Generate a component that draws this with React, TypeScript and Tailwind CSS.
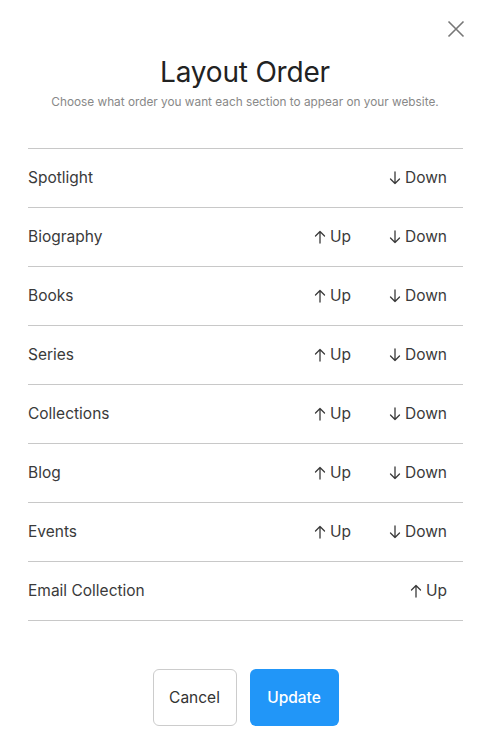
const sections = [
  "Spotlight",
  "Biography",
  "Books",
  "Series",
  "Collections",
  "Blog",
  "Events",
  "Email Collection",
];

const Arrow = ({ down }: { down?: boolean }) => (
  <svg
    width="12"
    height="14"
    viewBox="0 0 12 14"
    fill="none"
    stroke="currentColor"
    strokeWidth="1.3"
    strokeLinecap="round"
    strokeLinejoin="round"
    className={down ? "rotate-180" : ""}
  >
    <path d="M6 1.5v11.5M1.5 6 6 1.5 10.5 6" />
  </svg>
);

export default function App() {
  return (
    <div
      className="w-[490px] h-[753px] bg-white text-[#3a3a3a] relative"
      style={{ fontFamily: "Inter, 'Noto Sans', sans-serif" }}
    >
      {/* Close */}
      <button className="absolute left-[447px] top-[20px] text-[#777]">
        <svg width="18" height="18" viewBox="0 0 18 18" fill="none" stroke="currentColor" strokeWidth="1.6">
          <path d="M1.5 1.5l15 15M16.5 1.5l-15 15" />
        </svg>
      </button>

      <div className="pt-[54px] px-[28px]">
        <h1 className="text-center text-[28px] leading-[36px] text-[#222] tracking-[-0.2px]">
          Layout Order
        </h1>
        <p className="text-center text-[11.8px] leading-[14px] text-[#888] mt-[5px]">
          Choose what order you want each section to appear on your website.
        </p>

        {/* List */}
        <div className="mt-[39px] border-t border-[#c8c8c8] w-[435px]">
          {sections.map((name, i) => (
            <div
              key={name}
              className="h-[59px] border-b border-[#c8c8c8] flex items-center justify-between pr-4"
            >
              <span className="text-[15.5px]">{name}</span>
              <div className="flex items-center gap-[38px] text-[15.5px]">
                {i > 0 && (
                  <span className="flex items-center gap-[4px]">
                    <Arrow />
                    Up
                  </span>
                )}
                {i < sections.length - 1 && (
                  <span className="flex items-center gap-[4px]">
                    <Arrow down />
                    Down
                  </span>
                )}
              </div>
            </div>
          ))}
        </div>

        {/* Actions */}
        <div className="flex justify-center gap-[13px] mt-[48px] w-[435px]">
          <button className="h-[57px] w-[84px] border border-[#ccc] rounded-[6px] text-[15.5px] text-[#333]">
            Cancel
          </button>
          <button className="h-[57px] w-[89px] rounded-[6px] bg-[#2196f8] text-white text-[15.5px] font-medium">
            Update
          </button>
        </div>
      </div>
    </div>
  );
}
